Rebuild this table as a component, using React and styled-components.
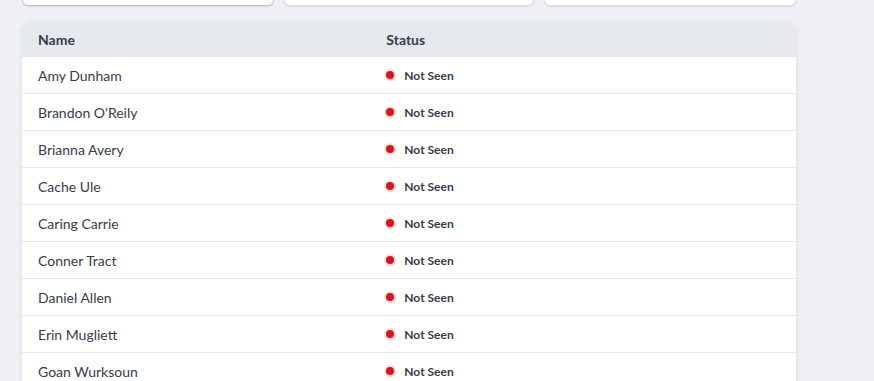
import React from "react";
import styled, { createGlobalStyle } from "styled-components";

const Global = createGlobalStyle`
  html, body { margin: 0; padding: 0; background: #eff0f5; }
  body { font-family: Lato, "Noto Sans", sans-serif; color: #3b4350; overflow: hidden; }
`;

const Page = styled.div`
  padding: 0 78px 0 22px;
  display: flex;
  flex-direction: column;
  gap: 16px;
`;

const Cards = styled.div`
  display: grid;
  grid-template-columns: 252px 250px 252px;
  gap: 10px;
  margin-top: -42px;
`;

const Card = styled.div`
  height: 48px;
  background: #ffffff;
  border: 1px solid ${(p) => (p.$active ? "#b9c0cc" : "#d9dde5")};
  border-radius: 6px;
  box-shadow: 0 1px 2px rgba(30, 40, 60, 0.1);
  box-sizing: border-box;
`;

const Table = styled.div`
  background: #ffffff;
  border-radius: 8px 8px 0 0;
  overflow: hidden;
  box-shadow: 0 1px 4px rgba(30, 40, 60, 0.1);
`;

const Row = styled.div`
  display: grid;
  grid-template-columns: 45% 55%;
  height: ${(p) => (p.$head ? "35px" : "37px")};
  background: ${(p) => (p.$head ? "#e5e8ed" : "#ffffff")};
  border-bottom: ${(p) => (p.$head ? "none" : "1px solid #e6e8ee")};
  box-sizing: border-box;
`;

const Cell = styled.div`
  display: flex;
  align-items: center;
  padding: 0 16px;
  font-size: 14px;
  font-weight: ${(p) => (p.$head ? 700 : 400)};
  color: #363d4a;
  white-space: nowrap;
`;

const Status = styled.span`
  display: inline-flex;
  align-items: center;
  gap: 10px;
  font-size: 12px;
  font-weight: 700;
  color: #363d4a;
`;

const Dot = styled.span`
  width: 8px;
  height: 8px;
  border-radius: 50%;
  background: #e0111b;
  box-shadow: 0 0 0 2px rgba(224, 17, 27, 0.15);
`;

const people = [
  "Amy Dunham",
  "Brandon O'Reily",
  "Brianna Avery",
  "Cache Ule",
  "Caring Carrie",
  "Conner Tract",
  "Daniel Allen",
  "Erin Mugliett",
  "Goan Wurksoun",
];

export default function App() {
  return (
    <>
      <Global />
      <Page>
        <Cards>
          <Card $active />
          <Card />
          <Card />
        </Cards>
        <Table>
          <Row $head>
            <Cell $head>Name</Cell>
            <Cell $head>Status</Cell>
          </Row>
          {people.map((n) => (
            <Row key={n}>
              <Cell>{n}</Cell>
              <Cell>
                <Status>
                  <Dot />
                  Not Seen
                </Status>
              </Cell>
            </Row>
          ))}
        </Table>
      </Page>
    </>
  );
}
